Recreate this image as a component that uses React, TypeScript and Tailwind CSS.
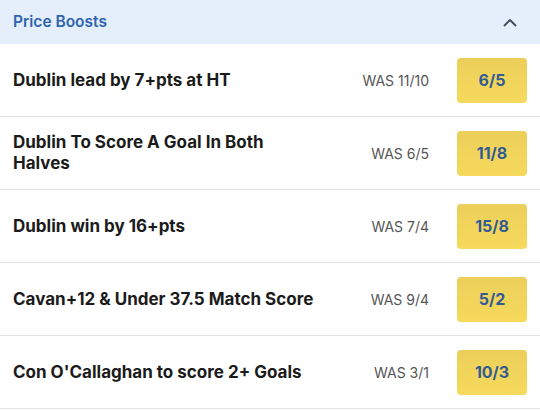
const boosts = [
  { label: "Dublin lead by 7+pts at HT", was: "11/10", price: "6/5" },
  { label: "Dublin To Score A Goal In Both Halves", was: "6/5", price: "11/8" },
  { label: "Dublin win by 16+pts", was: "7/4", price: "15/8" },
  { label: "Cavan+12 & Under 37.5 Match Score", was: "9/4", price: "5/2" },
  { label: "Con O'Callaghan to score 2+ Goals", was: "3/1", price: "10/3" },
];

function ChevronUp() {
  return (
    <svg width="14" height="9" viewBox="0 0 14 9" fill="none">
      <path
        d="M1.5 7.5L7 2L12.5 7.5"
        stroke="#3d4a5c"
        strokeWidth="1.8"
        strokeLinecap="round"
        strokeLinejoin="round"
      />
    </svg>
  );
}

export default function App() {
  return (
    <div className="w-[540px] h-[410px] bg-white overflow-hidden font-['Inter','Liberation_Sans',sans-serif]">
      <div className="h-[44px] bg-[#e4effb] flex items-center justify-between pl-[13px] pr-[23px]">
        <span className="text-[15.5px] font-semibold text-[#2f63ad]">Price Boosts</span>
        <ChevronUp />
      </div>
      {boosts.map((b) => (
        <div
          key={b.label}
          className="h-[73px] flex items-center pl-[13px] pr-[13px] border-b border-[#e2e2e2]"
        >
          <div className="flex-1 min-w-0">
            <div className="max-w-[308px] text-[17px] leading-[21px] font-bold text-[#1b1b1b]">
              {b.label}
            </div>
          </div>
          <span className="mr-[28px] text-[14px] text-[#555555]">WAS {b.was}</span>
          <div className="w-[70px] h-[45px] rounded-[4px] bg-gradient-to-b from-[#eccf5a] to-[#f6da5c] flex items-center justify-center">
            <span className="text-[16px] font-bold text-[#335b93]">{b.price}</span>
          </div>
        </div>
      ))}
    </div>
  );
}
